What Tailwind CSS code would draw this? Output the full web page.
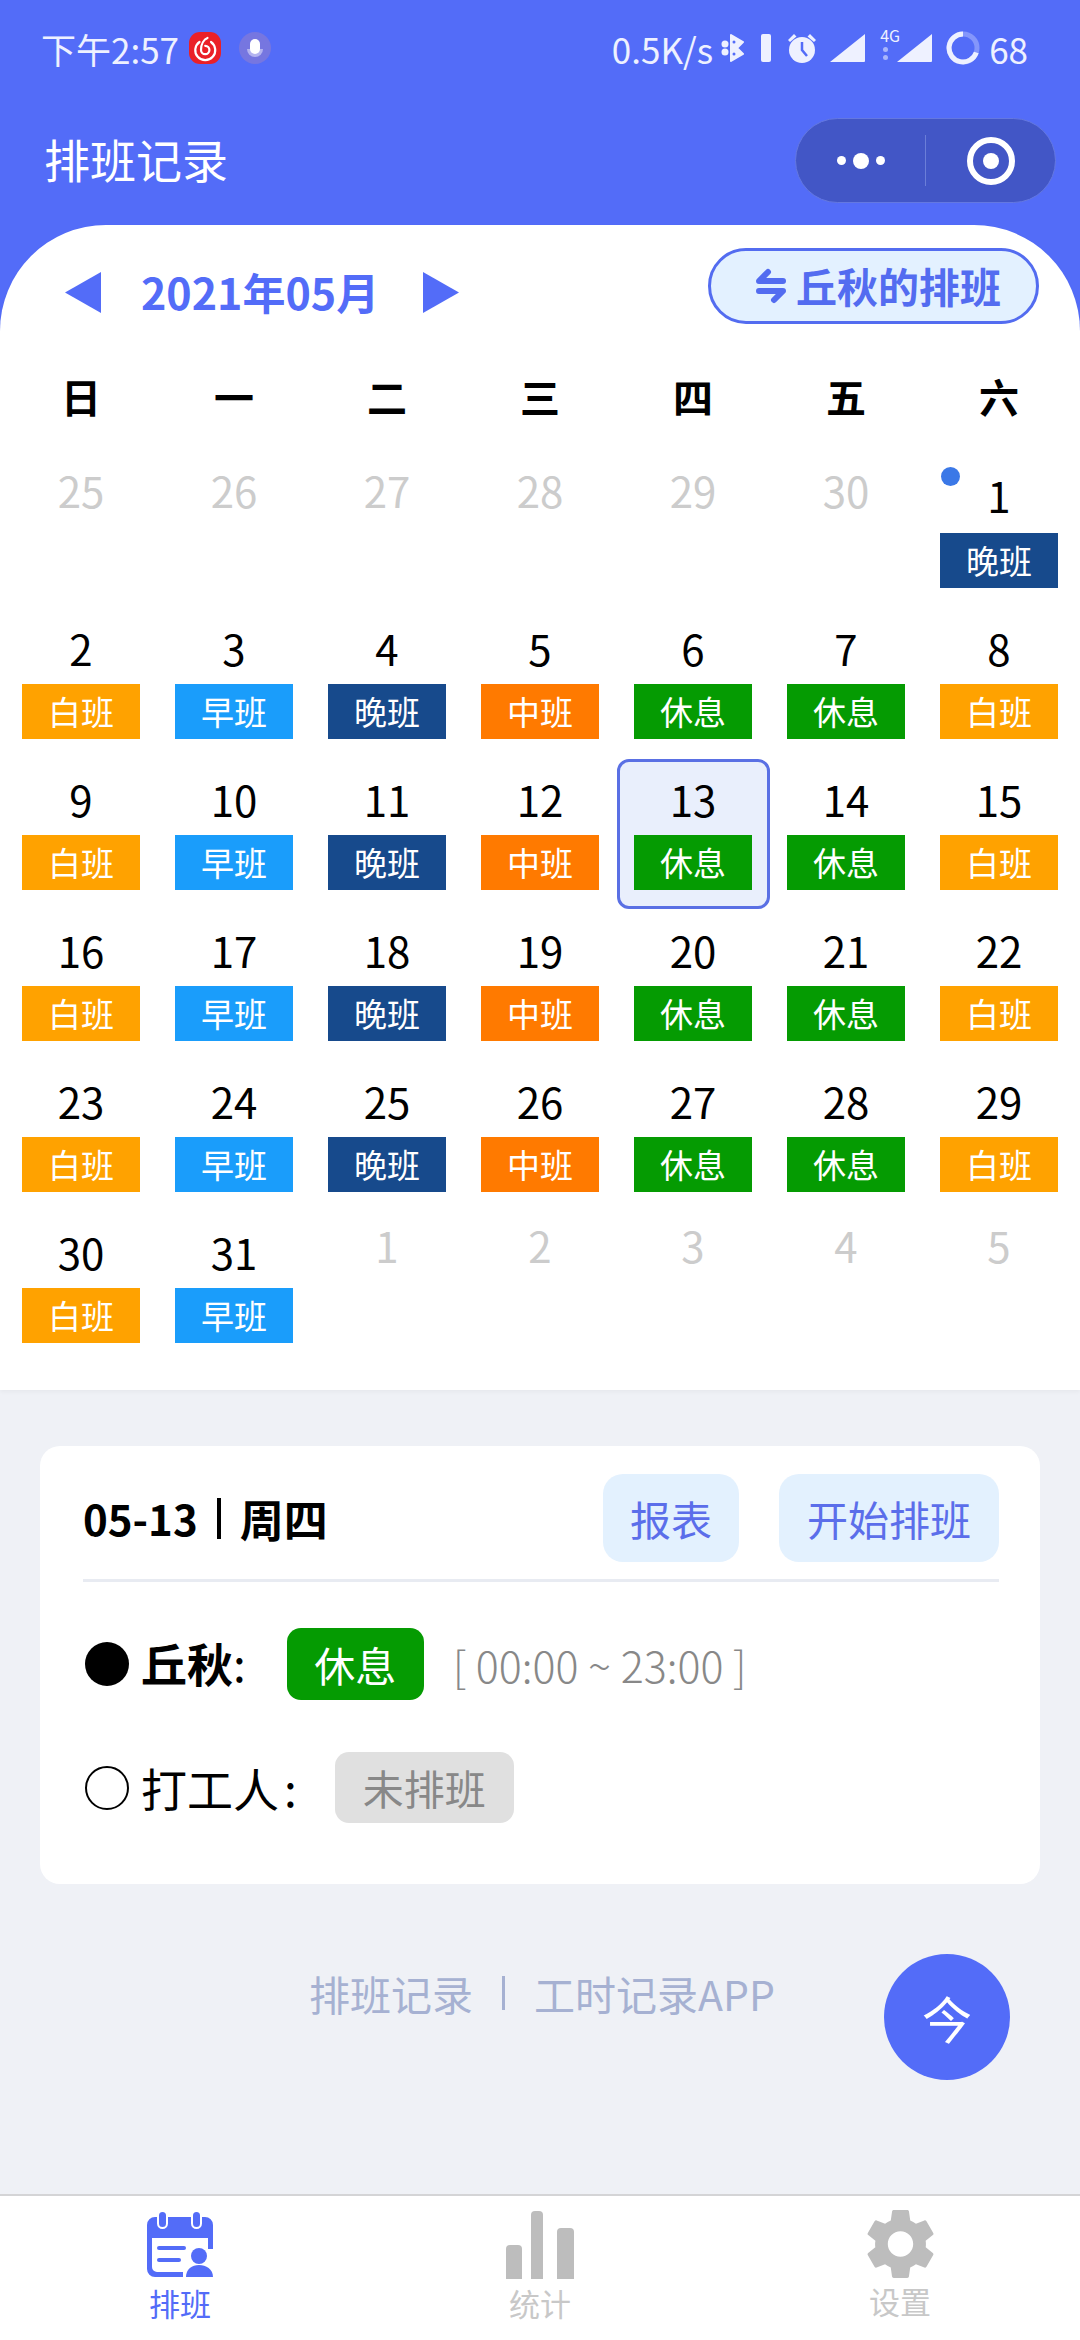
<!DOCTYPE html>
<html lang="zh-CN">
<head>
  <meta charset="UTF-8" />
  <meta name="viewport" content="width=device-width, initial-scale=1.0" />
  <title>排班记录</title>
  <script src="https://cdn.jsdelivr.net/npm/@tailwindcss/browser@4"></script>
</head>
<body class="w-[1080px] h-[2340px] overflow-hidden bg-[#eff1f6] font-['Noto_Sans_CJK_SC','Noto_Sans',sans-serif]">
  <div class="flex flex-col h-full">
    <!-- Blue header + calendar -->
    <div class="bg-[#536cf8]">
      <!-- Status bar -->
      <div class="flex items-center h-[96px] pl-[41px] pr-[52px] text-[#eef1ff] text-[35px] leading-none">
        <span>下午2:57</span>
        <svg class="ml-[10px]" width="32" height="32" viewBox="0 0 32 32"><rect width="32" height="32" rx="11" fill="#ea2027"/><path d="M10.500 10a10 10 0 1 0 11.500 0" fill="none" stroke="#fff" stroke-width="2.200" stroke-linecap="round"/><path d="M18.500 6c-3.500 1.500-6.500 6-6.500 12a4.200 4.200 0 1 0 4.200-4.200" fill="none" stroke="#fff" stroke-width="2.200" stroke-linecap="round"/></svg>
        <svg class="ml-[18px]" width="32" height="32" viewBox="0 0 32 32"><circle cx="16" cy="16" r="16" fill="#7676e0"/><path d="M8 17a8 8 0 0 0 16 0z" fill="#b4b4f0"/><rect x="11" y="7" width="10" height="15" rx="5" fill="#fff"/></svg>
        <span class="ml-auto">0.5K/s</span>
        <svg class="ml-[8px]" width="24" height="28" viewBox="0 0 24 28" fill="#eef1ff"><path d="M10 1l12 7-6 6 6 6-12 7z" stroke="#eef1ff" stroke-width="2" stroke-linejoin="round"/><circle cx="4" cy="10" r="3.500"/><circle cx="4" cy="18" r="3.500"/><circle cx="13" cy="8" r="1.500" fill="#536cf8"/><circle cx="13" cy="20" r="1.500" fill="#536cf8"/></svg>
        <div class="ml-[16px] w-[10px] h-[28px] rounded-[2px] bg-[#eef1ff]"></div>
        <svg class="ml-[16px]" width="30" height="30" viewBox="0 0 30 30"><path d="M1 7l6-6 2.500 2.500-6.500 5.500zM29 7l-6-6-2.500 2.500 6.500 5.500z" fill="#eef1ff"/><circle cx="15" cy="17" r="13" fill="#eef1ff"/><path d="M15 9v8l5 6" fill="none" stroke="#536cf8" stroke-width="2.500"/></svg>
        <svg class="ml-[12px]" width="36" height="30" viewBox="0 0 36 30"><path d="M36 1v27a1 1 0 0 1-1 1H1z" fill="#eef1ff"/></svg>
        <div class="relative ml-[31px] w-[36px] h-[30px]">
          <span class="absolute left-[-16px] top-[-6px] text-[16px] leading-none">4G</span>
          <span class="absolute left-[-13px] top-[14px] w-[5px] h-[5px] rounded-full bg-[#a9b6fb]"></span>
          <span class="absolute left-[-13px] top-[22px] w-[5px] h-[5px] rounded-full bg-[#a9b6fb]"></span>
          <svg class="block" width="36" height="30" viewBox="0 0 36 30"><path d="M36 1v27a1 1 0 0 1-1 1H1z" fill="#eef1ff"/></svg>
        </div>
        <svg class="ml-[14px]" width="34" height="34" viewBox="0 0 34 34" fill="none"><circle cx="17" cy="17" r="14" stroke="#8496fb" stroke-width="5"/><path d="M17 3a14 14 0 1 0 13.300 18.500" stroke="#eef1ff" stroke-width="5"/></svg>
        <span class="ml-[9px]">68</span>
      </div>

      <!-- Title bar -->
      <div class="flex items-center justify-between h-[129px] pl-[44px] pr-[24px]">
        <h1 class="pb-[5px] text-[46px] leading-none text-white">排班记录</h1>
        <div class="flex items-center w-[261px] h-[85px] rounded-full bg-[#4256c6] border border-[#6478e0]">
          <div class="flex items-center justify-center gap-[7px] w-[129px]">
            <span class="w-[9px] h-[9px] rounded-full bg-white"></span>
            <span class="w-[16px] h-[16px] rounded-full bg-white"></span>
            <span class="w-[9px] h-[9px] rounded-full bg-white"></span>
          </div>
          <div class="w-px h-[51px] bg-[#6b7ed8]"></div>
          <div class="flex items-center justify-center flex-1">
            <div class="flex items-center justify-center w-[48px] h-[48px] rounded-full border-[6px] border-white">
              <span class="w-[16px] h-[16px] rounded-full bg-white"></span>
            </div>
          </div>
        </div>
      </div>

      <!-- Calendar -->
      <section class="h-[1165px] bg-white rounded-t-[106px] shadow-[0_2px_4px_rgba(0,0,0,0.04)]">
        <div class="flex items-center h-[136px] pl-[65px] pr-[41px] pb-[1px]">
          <svg width="36" height="41" viewBox="0 0 36 41"><path d="M36 0v41L0 20.500z" fill="#536cf8"/></svg>
          <span class="ml-[40px] w-[234px] pb-[2px] text-[43px] leading-none font-bold whitespace-nowrap text-[#536cf8]">2021年05月</span>
          <svg class="ml-[48px]" width="36" height="41" viewBox="0 0 36 41"><path d="M0 0v41l36-20.500z" fill="#536cf8"/></svg>
          <button class="flex items-center justify-center gap-[10px] ml-auto w-[331px] h-[76px] mt-[-13px] pl-[10px] pb-[1px] rounded-full border-[3px] border-[#536cf0] bg-[#e3f1ff] text-[41px] leading-none font-bold text-[#536cf0]">
            <svg width="30" height="36" viewBox="0 0 30 36" fill="none" stroke="#536cf0" stroke-width="6" stroke-linecap="round" stroke-linejoin="round"><path d="M27 13H3l9-9"/><path d="M3 23h24l-9 9"/></svg>
            丘秋的排班
          </button>
        </div>
        <div class="grid grid-cols-7 h-[96px] px-[4.5px] pt-[15px] text-[40px] leading-none font-bold text-black">
          <span class="text-center">日</span><span class="text-center">一</span><span class="text-center">二</span><span class="text-center">三</span><span class="text-center">四</span><span class="text-center">五</span><span class="text-center">六</span>
        </div>
        <div id="days" class="grid grid-cols-7 auto-rows-[151px] px-[4.5px]"></div>
      </section>
    </div>

    <!-- Selected day card -->
    <section class="flex flex-col mt-[56px] mx-[40px] h-[438px] rounded-[20px] bg-white">
      <div class="flex items-center ml-[43px] mr-[41px] pt-[28px] pb-[17px] border-b-[3px] border-[#e8ebf2]">
        <span class="text-[42px] leading-none font-bold text-black">05-13</span>
        <span class="ml-[19px] w-[4px] h-[41px] bg-black"></span>
        <span class="ml-[19px] text-[44px] leading-none font-bold text-black">周四</span>
        <span class="flex items-center justify-center ml-auto w-[136px] h-[88px] rounded-[20px] bg-[#e3f1fe] text-[41px] leading-none text-[#5b6eea]">报表</span>
        <span class="flex items-center justify-center ml-[40px] w-[220px] h-[88px] rounded-[20px] bg-[#e3f1fe] text-[41px] leading-none text-[#5b6eea]">开始排班</span>
      </div>
      <div class="flex items-center mt-[46px] ml-[45px] h-[72px]">
        <span class="w-[44px] h-[44px] rounded-full bg-black"></span>
        <span class="ml-[12px] pb-[4px] text-[46px] leading-none font-bold text-black">丘秋<span class="font-normal">:</span></span>
        <span class="flex items-center justify-center ml-[41px] w-[137px] h-[72px] rounded-[14px] bg-[#059b02] text-[41px] leading-none text-white">休息</span>
        <span class="ml-[29px] text-[43px] leading-none font-light text-[#888888]">[ 00:00 ~ 23:00 ]</span>
      </div>
      <div class="flex items-center mt-[52px] ml-[45px] h-[71px]">
        <span class="w-[44px] h-[44px] rounded-full border-2 border-black"></span>
        <span class="ml-[12px] pb-[2px] text-[46px] leading-none text-black">打工人<span class="ml-[5px]">:</span></span>
        <span class="flex items-center justify-center ml-[38px] w-[179px] h-[71px] rounded-[14px] bg-[#e0e0e0] text-[41px] leading-none text-[#888888]">未排班</span>
      </div>
    </section>

    <!-- Footer line and today button -->
    <div class="flex items-center mt-[70px] pl-[309px] pr-[70px] h-[126px]">
      <div class="flex items-center mt-[-48px] text-[41px] leading-none text-[#a6b1d2]">
        <span>排班记录</span>
        <span class="mx-[29px] w-[3px] h-[34px] bg-[#a6b1d2]"></span>
        <span>工时记录APP</span>
      </div>
      <span class="flex items-center justify-center ml-auto w-[126px] h-[126px] rounded-full bg-[#536cf8] text-[50px] leading-none text-white">今</span>
    </div>

    <!-- Tab bar -->
    <nav class="grid grid-cols-3 mt-auto h-[146px] bg-white border-t-2 border-[#d4d4d6]">
      <div class="flex flex-col items-center pt-[15px] text-[#536cf8]">
        <svg class="h-[68px]" width="66" height="68" viewBox="0 0 66 68" fill="#536cf8">
          <path d="M8 6h50a8 8 0 0 1 8 8v24h-5V27H5v29a5 5 0 0 0 5 5h26v5H8a8 8 0 0 1-8-8V14a8 8 0 0 1 8-8z"/>
          <rect x="11" y="0" width="9" height="17" rx="4.500" stroke="#fff" stroke-width="2"/>
          <rect x="45" y="0" width="9" height="17" rx="4.500" stroke="#fff" stroke-width="2"/>
          <rect x="10" y="35" width="29" height="4" rx="2"/>
          <rect x="10" y="47" width="24" height="4" rx="2"/>
          <circle cx="52" cy="45" r="8"/>
          <path d="M39 66c0-8 6-12 13-12s14 4 14 12z"/>
        </svg>
        <span class="mt-[6px] text-[31px] leading-[36px]">排班</span>
      </div>
      <div class="flex flex-col items-center pt-[15px] text-[#c8c8c8]">
        <svg class="h-[68px]" width="68" height="68" viewBox="0 0 68 68" fill="#bdbdbd">
          <path d="M0 38a4 4 0 0 1 4-4h8a4 4 0 0 1 4 4v30H0z"/>
          <path d="M25 4a4 4 0 0 1 4-4h4a4 4 0 0 1 4 4v64H25z"/>
          <path d="M51 21a4 4 0 0 1 4-4h9a4 4 0 0 1 4 4v47H51z"/>
        </svg>
        <span class="mt-[6px] text-[31px] leading-[36px]">统计</span>
      </div>
      <div class="flex flex-col items-center pt-[12px] text-[#c8c8c8]">
        <svg class="h-[72px]" width="69" height="72" viewBox="2.500 1.800 19 20.400"><path fill="#bdbdbd" d="M19.140 12.940c.04-.3.06-.61.06-.94 0-.32-.02-.64-.07-.94l2.030-1.580c.18-.14.23-.41.12-.61l-1.920-3.320c-.12-.22-.37-.29-.59-.22l-2.390.96c-.5-.38-1.030-.7-1.620-.94l-.36-2.540c-.04-.24-.24-.41-.48-.41h-3.840c-.24 0-.43.17-.47.41l-.36 2.540c-.59.24-1.130.57-1.620.94l-2.390-.96c-.22-.08-.47 0-.59.22L2.740 8.870c-.12.21-.08.47.12.61l2.030 1.580c-.05.3-.09.63-.09.94s.02.64.07.94l-2.030 1.580c-.18.14-.23.41-.12.61l1.920 3.320c.12.22.37.29.59.22l2.390-.96c.5.38 1.030.7 1.620.94l.36 2.540c.05.24.24.41.48.41h3.840c.24 0 .44-.17.47-.41l.36-2.540c.59-.24 1.130-.56 1.620-.94l2.390.96c.22.08.47 0 .59-.22l1.920-3.320c.12-.22.07-.47-.12-.61l-2.010-1.580zM12 15.600c-1.980 0-3.600-1.620-3.600-3.600s1.620-3.600 3.600-3.600 3.600 1.620 3.600 3.600-1.620 3.600-3.600 3.600z"/></svg>
        <span class="mt-[3px] text-[31px] leading-[36px]">设置</span>
      </div>
    </nav>
  </div>

  <script>
    // shift name -> label classes
    const shifts = {
      白班: "bg-[#ffa200]",
      早班: "bg-[#1a9dfb]",
      晚班: "bg-[#174a8c]",
      中班: "bg-[#ff7a00]",
      休息: "bg-[#059b02]"
    };
    const week = ["白班", "早班", "晚班", "中班", "休息", "休息", "白班"];
    const days = document.getElementById("days");

    function grey(n) {
      return `<div class="flex justify-center h-[66px] items-center text-[42px] leading-none text-[#cccccc]">${n}</div>`;
    }

    function day(n, shift) {
      const selected = n === 13;
      const dot = n === 1 ? '<span class="absolute left-[18px] top-[10px] w-[19px] h-[19px] rounded-full bg-[#3b78e7]"></span>' : "";
      const cellClass = selected
        ? "relative flex flex-col items-center h-[150px] rounded-[12px] border-[3px] border-[#5a70e4] bg-[#e9effc]"
        : "relative flex flex-col items-center";
      const numClass = selected
        ? "flex items-center justify-center h-[73px] text-[42px] leading-none text-black"
        : n === 1
          ? "flex items-center justify-center h-[76px] text-[42px] leading-none text-black"
          : "flex items-center justify-center h-[76px] pt-[3px] text-[42px] leading-none text-black";
      return `<div class="${cellClass}">${dot}<div class="${numClass}">${n}</div><div class="flex items-center justify-center w-[118px] h-[55px] text-[33px] leading-none text-white ${shifts[shift]}">${shift}</div></div>`;
    }

    let html = [25, 26, 27, 28, 29, 30].map(grey).join("");
    for (let n = 1; n <= 31; n++) {
      // May 2 is a Sunday, May 1 a Saturday
      const shift = n === 1 ? "晚班" : week[(n - 2) % 7];
      html += day(n, shift);
    }
    html += [1, 2, 3, 4, 5].map(grey).join("");
    days.innerHTML = html;
  </script>
</body>
</html>
